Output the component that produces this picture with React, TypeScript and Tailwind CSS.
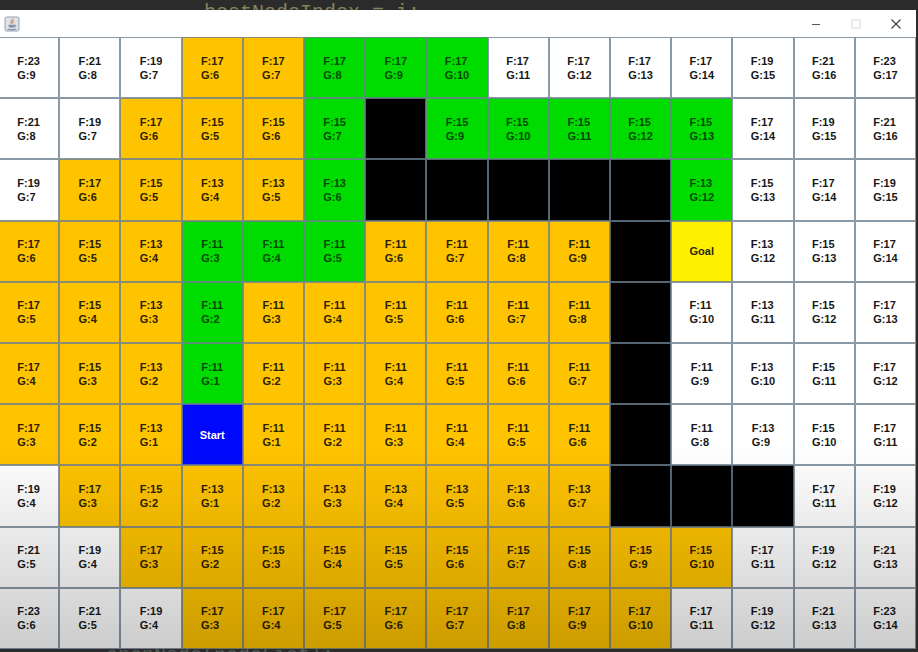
type Kind = "w" | "o" | "g" | "k" | "s" | "e";

const kinds: string[] = [
  "wwwoogggwwwwwww",
  "wwooogkgggggwww",
  "woooogkkkkkgwww",
  "ooogggooookewww",
  "ooogooooookwwww",
  "ooogooooookwwww",
  "ooosooooookwwww",
  "woooooooookkkww",
  "wwoooooooooowww",
  "wwwoooooooowwww",
];

const fCosts: number[][] = [
  [23, 21, 19, 17, 17, 17, 17, 17, 17, 17, 17, 17, 19, 21, 23],
  [21, 19, 17, 15, 15, 15, 0, 15, 15, 15, 15, 15, 17, 19, 21],
  [19, 17, 15, 13, 13, 13, 0, 0, 0, 0, 0, 13, 15, 17, 19],
  [17, 15, 13, 11, 11, 11, 11, 11, 11, 11, 0, 0, 13, 15, 17],
  [17, 15, 13, 11, 11, 11, 11, 11, 11, 11, 0, 11, 13, 15, 17],
  [17, 15, 13, 11, 11, 11, 11, 11, 11, 11, 0, 11, 13, 15, 17],
  [17, 15, 13, 0, 11, 11, 11, 11, 11, 11, 0, 11, 13, 15, 17],
  [19, 17, 15, 13, 13, 13, 13, 13, 13, 13, 0, 0, 0, 17, 19],
  [21, 19, 17, 15, 15, 15, 15, 15, 15, 15, 15, 15, 17, 19, 21],
  [23, 21, 19, 17, 17, 17, 17, 17, 17, 17, 17, 17, 19, 21, 23],
];

const START_COL = 3;
const START_ROW = 6;

const fills: Record<Kind, string> = {
  w: "bg-white text-neutral-900",
  o: "bg-[#ffc400] text-[#2b2000]",
  g: "bg-[#00dc00] text-[#004a00]",
  k: "bg-black text-black",
  s: "bg-[#0008fc] text-white",
  e: "bg-[#fff000] text-[#2b2800]",
};

function JavaIcon() {
  return (
    <svg viewBox="0 0 16 16" className="size-4" aria-hidden="true">
      <rect x="1" y="1" width="14" height="14" rx="1.5" fill="#dfe3e8" stroke="#93a0ad" />
      <path d="M8.6 2.5c1 1.5-2.2 2.3-1.8 3.8.2.7.8 1 .9 1.8M10 4.800c-1.500.800-1.700 1.400-1.100 2.600" fill="none" stroke="#cf8f62" strokeWidth="1.100" />
      <path d="M4.500 8.800h6v1.200c0 1.200-1 1.800-3 1.800s-3-.6-3-1.800z" fill="#8396a8" />
      <path d="M10.500 9c2-.4 1.800 1.800-.4 2M3.500 13.200c2.500.7 6.500.7 8.800-.2" fill="none" stroke="#6f8598" />
    </svg>
  );
}

function TitleBar() {
  return (
    <header className="flex h-[27px] items-center justify-between bg-white pl-1">
      <JavaIcon />
      <div className="flex h-full">
        <button aria-label="Minimize" className="grid w-10 place-items-center">
          <svg viewBox="0 0 10 10" className="size-[10px]">
            <path d="M1 5.500h8" stroke="#555" />
          </svg>
        </button>
        <button aria-label="Maximize" disabled className="grid w-10 place-items-center">
          <svg viewBox="0 0 10 10" className="size-[10px]">
            <rect x="1" y="1" width="8" height="8" fill="none" stroke="#d8d8d8" />
          </svg>
        </button>
        <button aria-label="Close" className="grid w-10 place-items-center">
          <svg viewBox="0 0 10 10" className="size-[10px]">
            <path d="M.5.5l9 9M9.500.5l-9 9" stroke="#444" strokeWidth="1.200" />
          </svg>
        </button>
      </div>
    </header>
  );
}

function Cell({ row, col }: { row: number; col: number }) {
  const kind = kinds[row][col] as Kind;
  const g = Math.abs(col - START_COL) + Math.abs(row - START_ROW);
  return (
    <button
      aria-label={kind === "k" ? "Wall" : undefined}
      className={`flex min-w-0 items-center justify-center border border-[#6d7f90]/80 text-[11px] leading-[14px] font-bold ${fills[kind]}`}
    >
      {kind === "s" && "Start"}
      {kind === "e" && "Goal"}
      {(kind === "w" || kind === "o" || kind === "g") && (
        <span className="text-left">
          F:{fCosts[row][col]}
          <br />
          G:{g}
        </span>
      )}
    </button>
  );
}

export default function App() {
  return (
    <div className="min-h-screen overflow-hidden bg-[#2b2b2b] font-['Liberation_Sans',Arial,sans-serif]">
      <div className="h-[10px] overflow-hidden pl-[204px] font-['Liberation_Mono',monospace] text-[20px] leading-[26px] whitespace-pre text-[#85825c]">
        bestNodeIndex = i;
      </div>
      <main className="mr-[2px]">
        <TitleBar />
        <div className="relative -ml-[2px] grid aspect-[3/2] grid-cols-15 grid-rows-10">
          {kinds.map((line, row) =>
            [...line].map((_, col) => <Cell key={`${row}-${col}`} row={row} col={col} />),
          )}
          <div className="pointer-events-none absolute inset-x-0 bottom-0 h-1/3 bg-linear-to-b from-transparent to-black/20" />
        </div>
      </main>
      <div className="h-[3px] overflow-hidden pl-[106px] font-['Liberation_Mono',monospace] text-[20px] leading-[14px] whitespace-pre text-[#4d5a55]">
        openNode(nodeList);
      </div>
    </div>
  );
}
